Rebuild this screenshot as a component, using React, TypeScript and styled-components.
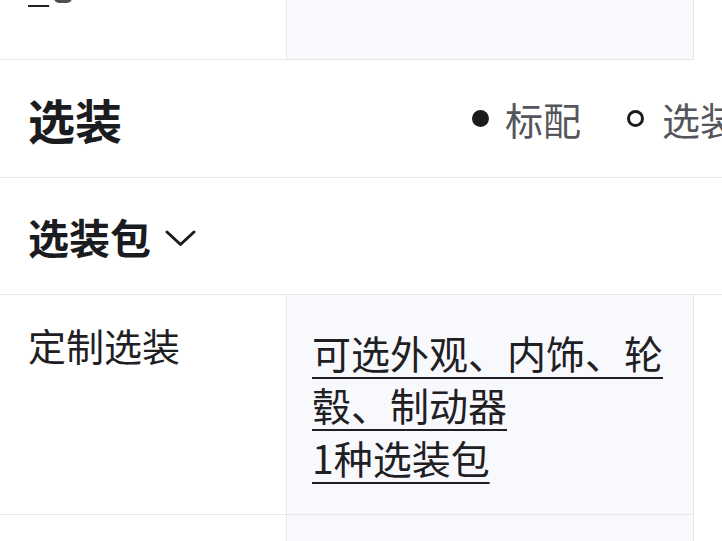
import React from 'react';
import styled, { createGlobalStyle } from 'styled-components';

const GlobalStyle = createGlobalStyle`
  html, body {
    margin: 0;
    padding: 0;
    background: #ffffff;
    overflow: hidden;
  }
  body {
    font-family: "Noto Sans CJK SC", "Noto Sans", sans-serif;
    color: #1f2024;
  }
`;

const Page = styled.div`
  width: 766px;
  height: 541px;
  overflow: hidden;
  background: #ffffff;
`;

const Row = styled.div<{ $top?: number }>`
  display: grid;
  grid-template-columns: 286px 408px;
  width: 694px;
  border-bottom: 1px solid #e7e8ec;
  margin-top: ${({ $top }) => ($top ? `${$top}px` : '0')};
`;

const LabelCell = styled.div<{ $pt?: number; $pb?: number }>`
  padding: ${({ $pt = 24 }) => $pt}px 20px ${({ $pb = 24 }) => $pb}px 28px;
  font-size: 38px;
  line-height: 52.5px;
  color: #1f2024;
`;

const ValueCell = styled.div<{ $pt?: number; $pb?: number }>`
  padding: ${({ $pt = 31 }) => $pt}px 26px ${({ $pb = 31 }) => $pb}px 25px;
  background: #f8f9fc;
  border-left: 1px solid #e9eaef;
  border-right: 1px solid #e7e8ec;
  font-size: 39px;
  line-height: 52.5px;
  color: #1f2024;
`;

const Link = styled.span`
  text-decoration: underline;
  text-decoration-thickness: 2px;
  text-underline-offset: 8px;
  text-decoration-color: #1f2024;
`;

const Badge = styled.span`
  display: inline-block;
  width: 18px;
  height: 18px;
  margin-left: 5px;
  border-radius: 5px;
  background: #4d4e58;
  vertical-align: -6px;
`;

const SectionHeader = styled.div<{ $h: number }>`
  display: flex;
  align-items: center;
  justify-content: space-between;
  height: ${({ $h }) => $h}px;
  padding: 0 28px;
  border-bottom: 1px solid #e7e8ec;
`;

const Title = styled.div<{ $size: number }>`
  display: flex;
  align-items: center;
  gap: 14px;
  font-size: ${({ $size }) => $size}px;
  font-weight: 700;
  color: #1b1c20;
`;

const Legend = styled.div`
  display: flex;
  align-items: center;
  font-size: 38px;
  color: #55565c;
`;

const LegendItem = styled.div<{ $gap: number }>`
  display: flex;
  align-items: center;
  gap: ${({ $gap }) => $gap}px;
  & + & {
    margin-left: 46px;
  }
`;

const Dot = styled.span<{ $hollow?: boolean }>`
  box-sizing: border-box;
  flex: 0 0 auto;
  display: block;
  width: 17px;
  height: 17px;
  border-radius: 50%;
  margin-top: 1px;
  background: ${({ $hollow }) => ($hollow ? 'transparent' : '#1b1c20')};
  border: ${({ $hollow }) => ($hollow ? '3px solid #1b1c20' : 'none')};
`;

const Chevron = () => (
  <svg width="31" height="18" viewBox="0 0 31 18" fill="none" style={{ marginTop: 4 }}>
    <polyline points="2,3 15.5,15.5 29,3" stroke="#1b1c20" strokeWidth="3" strokeLinecap="round" strokeLinejoin="round" />
  </svg>
);

export default function App() {
  return (
    <Page>
      <GlobalStyle />
      <Row $top={-75}>
        <LabelCell $pt={30} $pb={51}>
          <Link>9</Link>
          <Badge />
        </LabelCell>
        <ValueCell $pt={30} $pb={51}>&nbsp;</ValueCell>
      </Row>

      <SectionHeader $h={117}>
        <Title $size={47}>选装</Title>
        <Legend>
          <LegendItem $gap={16}>
            <Dot />
            <span>标配</span>
          </LegendItem>
          <LegendItem $gap={18}>
            <Dot $hollow />
            <span>选装</span>
          </LegendItem>
        </Legend>
      </SectionHeader>

      <SectionHeader $h={116}>
        <Title $size={41}>
          选装包
          <Chevron />
        </Title>
      </SectionHeader>

      <Row>
        <LabelCell>定制选装</LabelCell>
        <ValueCell>
          <Link>可选外观、内饰、轮毂、制动器</Link>
          <br />
          <Link>1种选装包</Link>
        </ValueCell>
      </Row>

      <Row>
        <LabelCell>&nbsp;</LabelCell>
        <ValueCell>&nbsp;</ValueCell>
      </Row>
    </Page>
  );
}
